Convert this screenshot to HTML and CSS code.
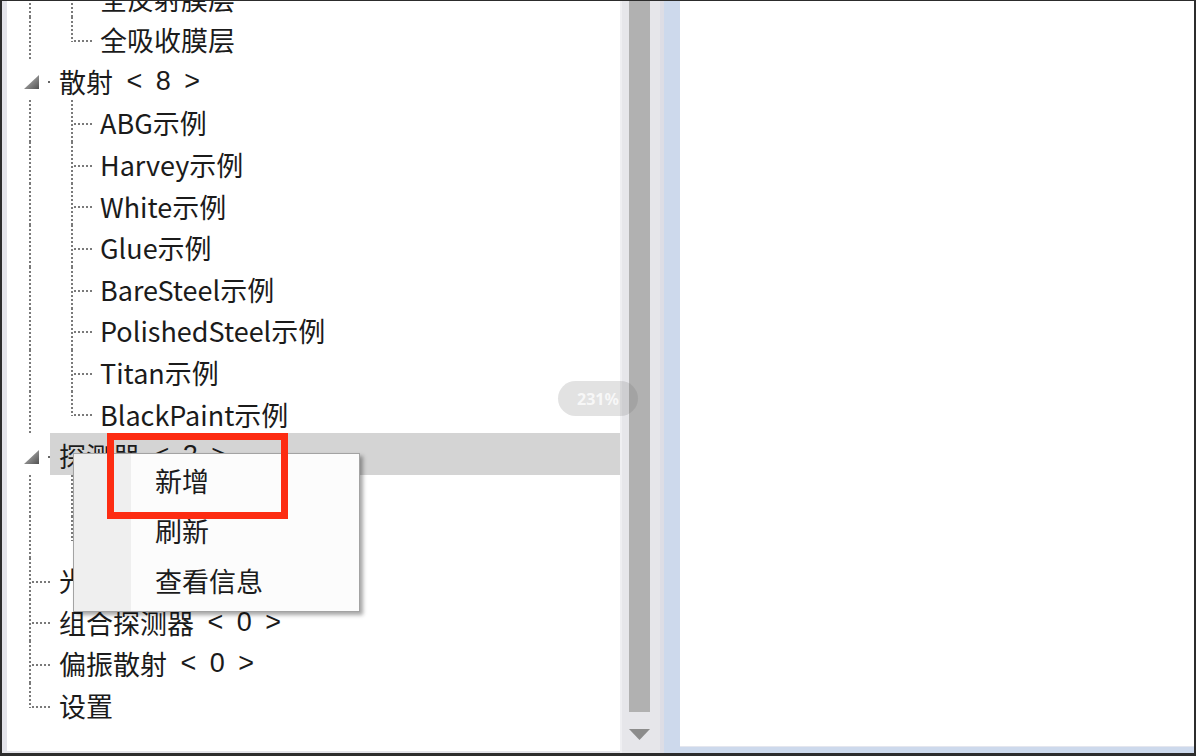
FILE: index.html
```html
<!DOCTYPE html>
<html lang="zh-CN">
<head>
<meta charset="utf-8">
<title>Tree</title>
<link rel="stylesheet" href="styles.css">
</head>
<body>
<div class="screen">
  <div class="frame">
    <div class="strip"></div>
    <div class="tree">
      <div class="rows">
        <div class="row"><span class="g pipe"></span><span class="g tee"></span><span class="label">全反射膜层</span></div>
        <div class="row"><span class="g pipe"></span><span class="g elbow"></span><span class="label">全吸收膜层</span></div>
        <div class="row"><span class="g exp"><svg width="26" height="14" viewBox="0 0 26 14"><defs><linearGradient id="tg" x1="0" y1="0" x2="1" y2="1"><stop offset="0" stop-color="#c8c8c8"/><stop offset="1" stop-color="#505050"/></linearGradient></defs><polygon points="0,14 15,14 15,0" fill="url(#tg)"/><rect x="24" y="6" width="2" height="2" fill="#666"/></svg></span><span class="label top">散射<span class="cnt"> &lt; 8 &gt;</span></span></div>
        <div class="row"><span class="g pipe"></span><span class="g tee"></span><span class="label">ABG示例</span></div>
        <div class="row"><span class="g pipe"></span><span class="g tee"></span><span class="label">Harvey示例</span></div>
        <div class="row"><span class="g pipe"></span><span class="g tee"></span><span class="label">White示例</span></div>
        <div class="row"><span class="g pipe"></span><span class="g tee"></span><span class="label">Glue示例</span></div>
        <div class="row"><span class="g pipe"></span><span class="g tee"></span><span class="label">BareSteel示例</span></div>
        <div class="row"><span class="g pipe"></span><span class="g tee"></span><span class="label">PolishedSteel示例</span></div>
        <div class="row"><span class="g pipe"></span><span class="g tee"></span><span class="label">Titan示例</span></div>
        <div class="row"><span class="g pipe"></span><span class="g elbow"></span><span class="label">BlackPaint示例</span></div>
        <div class="row"><span class="g exp"><svg width="26" height="14" viewBox="0 0 26 14"><defs><linearGradient id="tg2" x1="0" y1="0" x2="1" y2="1"><stop offset="0" stop-color="#c8c8c8"/><stop offset="1" stop-color="#505050"/></linearGradient></defs><polygon points="0,14 15,14 15,0" fill="url(#tg2)"/><rect x="24" y="6" width="2" height="2" fill="#666"/></svg></span><span class="label top sel">探测器<span class="cnt"> &lt; 2 &gt;</span></span></div>
        <div class="row"><span class="g pipe"></span><span class="g tee"></span><span class="label">探测器1</span></div>
        <div class="row"><span class="g pipe"></span><span class="g elbow"></span><span class="label">探测器2</span></div>
        <div class="row"><span class="g tee"></span><span class="label top">光源<span class="cnt"> &lt; 1 &gt;</span></span></div>
        <div class="row"><span class="g tee"></span><span class="label top">组合探测器<span class="cnt"> &lt; 0 &gt;</span></span></div>
        <div class="row"><span class="g tee"></span><span class="label top">偏振散射<span class="cnt"> &lt; 0 &gt;</span></span></div>
        <div class="row"><span class="g elbow"></span><span class="label top">设置</span></div>
      </div>
    </div>
    <div class="vscroll">
      <div class="thumb"></div>
      <svg class="arrow" width="21" height="11" viewBox="0 0 21 11"><polygon points="0,0 21,0 10.5,11" fill="#8c8c8c"/></svg>
    </div>
    <div class="sep"></div>
    <div class="pane"><div class="panel"></div></div>
  </div>

  <div class="zoom-pill">231%</div>

  <div class="menu">
    <div class="item">新增</div>
    <div class="item">刷新</div>
    <div class="item">查看信息</div>
  </div>

  <div class="mark"></div>
</div>
</body>
</html>
```

FILE: styles.css
```css
html, body {
  margin: 0;
  padding: 0;
  background: #ffffff;
}

body {
  font-family: "Noto Sans CJK SC", "Noto Sans", sans-serif;
  color: #1b1b1b;
}

.screen {
  position: relative;
  width: 1196px;
  height: 756px;
  overflow: hidden;
}

.frame {
  width: 1196px;
  height: 756px;
  box-sizing: border-box;
  border-style: solid;
  border-color: #2c2c2c;
  border-width: 1px 2px 3px 2px;
  display: flex;
}

.strip {
  width: 5px;
  flex: none;
  background: #e3e3e9;
}

.tree {
  width: 613px;
  flex: none;
  background: #ffffff;
  border-bottom: 2px solid #e3e3e9;
  overflow: hidden;
}

.rows {
  margin-top: -25.6px;
  padding-left: 1px;
}

.row {
  height: 41.6px;
  display: flex;
  align-items: stretch;
}

.g {
  width: 42px;
  flex: none;
  position: relative;
}

.g.pipe::before,
.g.tee::before,
.g.elbow::before {
  content: "";
  position: absolute;
  left: 21px;
  top: 0;
  width: 2px;
  height: 100%;
  background: linear-gradient(to bottom, #7a7a7a 50%, transparent 50%) 0 0 / 2px 4px repeat-y;
}

.g.elbow::before {
  height: 25px;
}

.g.tee::after,
.g.elbow::after {
  content: "";
  position: absolute;
  left: 24px;
  top: 23px;
  width: 18px;
  height: 2px;
  background: linear-gradient(to right, #7a7a7a 50%, transparent 50%) 0 0 / 4px 2px repeat-x;
}

.g.exp {
  display: flex;
  align-items: center;
  padding: 6px 0 0 16px;
  box-sizing: border-box;
}

.g.exp svg {
  display: block;
}

.label {
  flex: 1;
  display: flex;
  align-items: center;
  box-sizing: border-box;
  padding: 4px 0 0 8px;
  font-size: 27px;
  line-height: 1;
  white-space: pre;
}

.label.top {
  padding-left: 9px;
}

.label.sel {
  background: #d4d4d4;
}

.cnt {
  font-family: "Liberation Sans", "Noto Sans", sans-serif;
  word-spacing: 6px;
  white-space: pre;
}

.vscroll {
  width: 40px;
  flex: none;
  box-sizing: border-box;
  background: #e6e6ea;
  border-left: 2px solid #efeff2;
  padding: 0 10px 0 7px;
  display: flex;
  flex-direction: column;
  align-items: stretch;
}

.thumb {
  height: 711px;
  background: #b1b1b1;
}

.arrow {
  display: block;
  margin-top: 17px;
}

.sep {
  width: 4px;
  flex: none;
  background: #dddde5;
}

.pane {
  flex: 1;
  box-sizing: border-box;
  background: #cdd9ec;
  padding: 0 0 6px 16px;
}

.panel {
  height: 100%;
  background: #ffffff;
  border-bottom: 1px solid #e4e6ee;
  box-sizing: border-box;
}

.zoom-pill {
  position: absolute;
  left: 558px;
  top: 381px;
  width: 80px;
  height: 35px;
  border-radius: 18px;
  background: rgba(110, 110, 110, 0.2);
  color: rgba(255, 255, 255, 0.75);
  font-family: "Noto Sans", sans-serif;
  font-weight: bold;
  font-size: 16px;
  display: flex;
  align-items: center;
  justify-content: center;
}

.menu {
  position: absolute;
  left: 73px;
  top: 453px;
  width: 287px;
  height: 159px;
  box-sizing: border-box;
  border: 1px solid #a3a3a3;
  background: linear-gradient(to right, #efefef 57px, #fcfcfc 57px);
  box-shadow: 3px 3px 4px rgba(0, 0, 0, 0.35);
  padding-top: 1px;
}

.item {
  height: 50px;
  display: flex;
  align-items: center;
  padding: 0 0 0 81px;
  box-sizing: border-box;
  font-size: 27px;
  line-height: 1;
  color: #1b1b1b;
}

.mark {
  position: absolute;
  left: 107px;
  top: 433px;
  width: 181px;
  height: 86px;
  box-sizing: border-box;
  border: 7px solid #fd2c12;
}
```
